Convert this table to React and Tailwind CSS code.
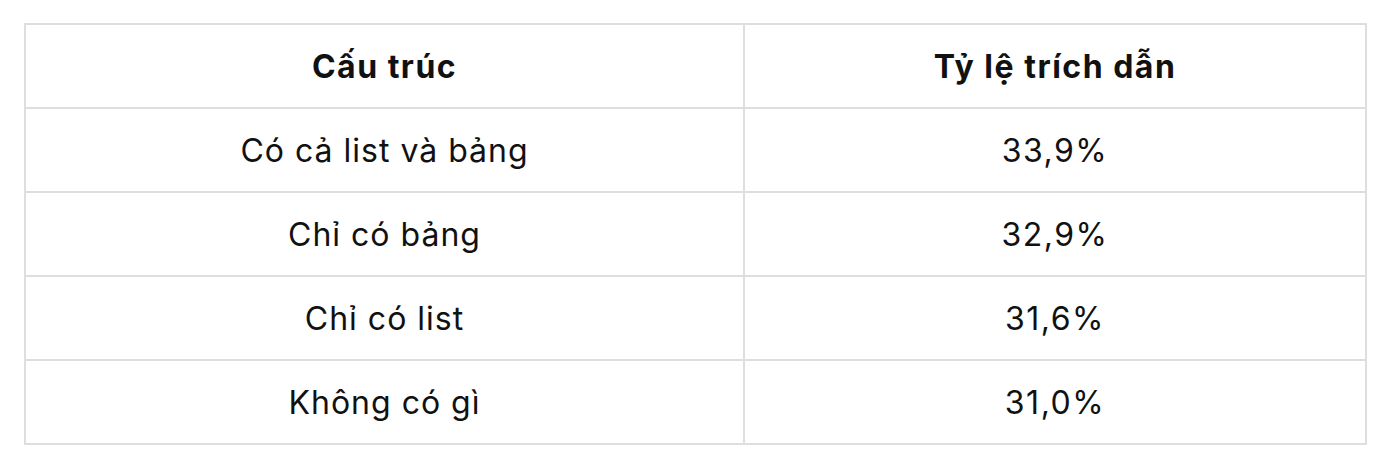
import React from 'react';

const rows = [
    ['Có cả list và bảng', '33,9%'],
    ['Chỉ có bảng', '32,9%'],
    ['Chỉ có list', '31,6%'],
    ['Không có gì', '31,0%'],
];

const App = () => {
    return (
        <div className="w-[1390px] h-[466px] bg-white pl-[24px] pt-[23px]" style={{ fontFamily: 'Inter, "Noto Sans", sans-serif' }}>
            <table className="w-[1341px] table-fixed border-collapse text-[#111111] text-[32px]">
                <colgroup>
                    <col className="w-[719px]" />
                    <col className="w-[622px]" />
                </colgroup>
                <thead>
                    <tr className="h-[84px]">
                        <th className="border-2 border-[#dedede] pt-[2px] font-bold text-center tracking-[1.5px]">Cấu trúc</th>
                        <th className="border-2 border-[#dedede] pt-[2px] font-bold text-center tracking-[1.5px]">Tỷ lệ trích dẫn</th>
                    </tr>
                </thead>
                <tbody>
                    {rows.map(([name, rate]) => (
                        <tr key={name} className="h-[84px]">
                            <td className="border-2 border-[#dedede] pt-[2px] text-center font-normal tracking-[1px]">{name}</td>
                            <td className="border-2 border-[#dedede] pt-[2px] text-center font-normal tracking-[1.5px]">{rate}</td>
                        </tr>
                    ))}
                </tbody>
            </table>
        </div>
    );
};

export default App;
